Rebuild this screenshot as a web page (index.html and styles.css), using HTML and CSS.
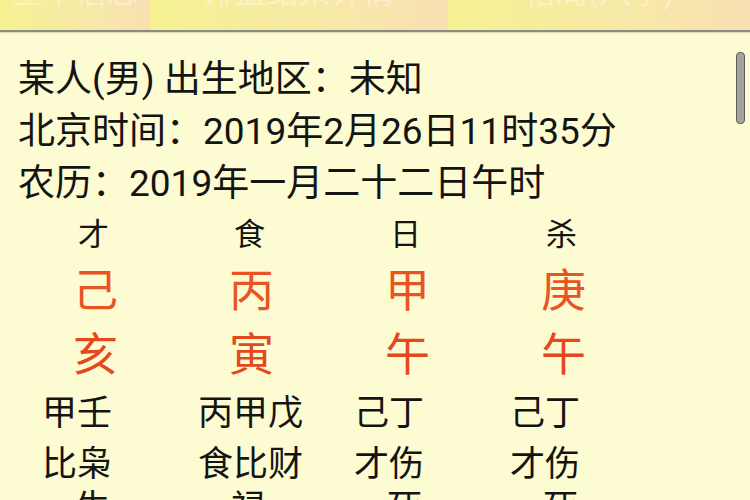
FILE: index.html
```html
<!DOCTYPE html>
<html lang="zh-CN">
<head>
<meta charset="utf-8">
<title>排盘</title>
<link rel="stylesheet" href="styles.css">
</head>
<body>
<div class="screen">
  <div class="tabs">
    <div class="tab tab-1"><span class="tab-label">基本信息</span></div>
    <div class="tab tab-2"><span class="tab-label">排盘结果详情</span></div>
    <div class="tab tab-3"><span class="tab-label">格局(八字)</span></div>
  </div>
  <div class="content">
    <div class="info">
      <div class="line">某人(男) 出生地区：未知</div>
      <div class="line">北京时间：2019年2月26日11时35分</div>
      <div class="line">农历：2019年一月二十二日午时</div>
    </div>
    <div class="chart">
      <div class="row row-god">
        <div class="cell">才</div><div class="cell">食</div><div class="cell">日</div><div class="cell">杀</div>
      </div>
      <div class="row row-stem">
        <div class="cell">己</div><div class="cell">丙</div><div class="cell">甲</div><div class="cell">庚</div>
      </div>
      <div class="row row-branch">
        <div class="cell">亥</div><div class="cell">寅</div><div class="cell">午</div><div class="cell">午</div>
      </div>
      <div class="row row-hidden">
        <div class="cell">甲壬</div><div class="cell">丙甲戊</div><div class="cell">己丁</div><div class="cell">己丁</div>
      </div>
      <div class="row row-hidden">
        <div class="cell">比枭</div><div class="cell">食比财</div><div class="cell">才伤</div><div class="cell">才伤</div>
      </div>
      <div class="row row-stage">
        <div class="cell">生</div><div class="cell">禄</div><div class="cell">死</div><div class="cell">死</div>
      </div>
    </div>
    <div class="scrollbar"></div>
  </div>
</div>
</body>
</html>
```

FILE: styles.css
```css
html, body {
  margin: 0;
  padding: 0;
}

body {
  width: 750px;
  height: 500px;
  overflow: hidden;
  background: #fdfbd2;
  font-family: "Roboto", "Noto Sans CJK SC", sans-serif;
  color: #141412;
}

.screen {
  width: 750px;
  height: 500px;
  display: flex;
  flex-direction: column;
}

.tabs {
  display: flex;
  height: 30px;
  border-bottom: 2px solid #8c8b80;
  box-shadow: 0 1px 1px rgba(120, 120, 100, 0.25);
  flex: none;
}

.tab {
  overflow: hidden;
  display: flex;
  justify-content: center;
  align-items: flex-start;
  background: linear-gradient(to right, #f6f193, #f7e9a8 60%, #f8e0b2);
}

.tab-1 { width: 150px; }
.tab-2 { width: 298px; }
.tab-3 { width: 302px; }

.tab-label {
  font-size: 32px;
  line-height: 32px;
  margin-top: -24px;
  color: rgba(255, 255, 255, 0.4);
  white-space: nowrap;
}

.content {
  position: relative;
  flex: 1;
  overflow: hidden;
}

.info {
  padding: 22px 18px 0;
  font-size: 37px;
  line-height: 52px;
}

.line {
  white-space: nowrap;
}

.row {
  display: grid;
  grid-template-columns: repeat(4, 156px);
  padding-left: 42px;
}

.cell {
  white-space: nowrap;
}

.row-god {
  font-size: 31px;
  line-height: 50px;
  color: #141412;
}

.row-god .cell {
  padding-left: 36px;
}

.row-stem,
.row-branch {
  font-size: 45px;
  line-height: 64px;
  color: #ea5322;
}

.row-stem .cell,
.row-branch .cell {
  padding-left: 31px;
}

.row-branch {
  color: #e5481c;
}

.row-hidden {
  font-size: 35px;
  line-height: 51px;
}

.row-hidden .cell {
  padding-left: 0;
}

.row-stage {
  font-size: 35px;
  line-height: 38px;
}

.row-stage .cell {
  padding-left: 33px;
}

.scrollbar {
  position: absolute;
  right: 5px;
  top: 20px;
  width: 7px;
  height: 70px;
  border-radius: 4px;
  background: #a3a3a0;
  border: 1px solid #5e5e5a;
}
```
